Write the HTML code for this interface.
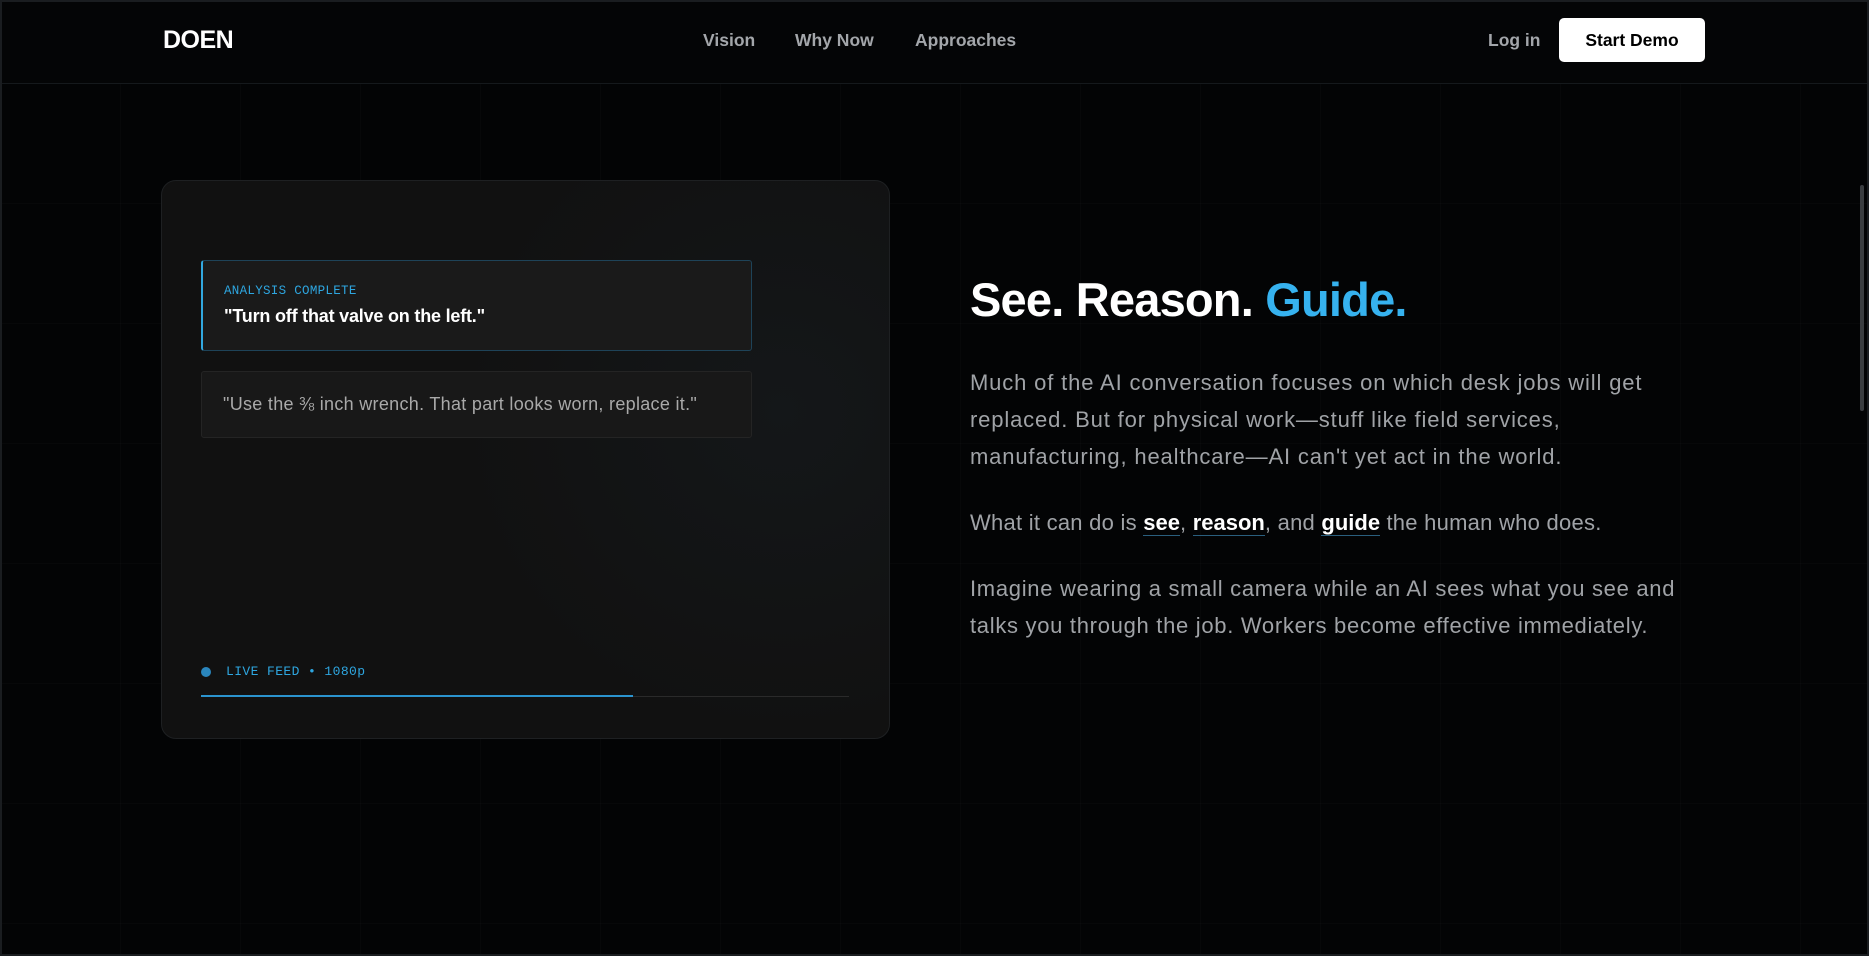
<!DOCTYPE html>
<html><head><meta charset="utf-8"><style>
*{margin:0;padding:0;box-sizing:border-box}
html,body{width:1869px;height:956px;overflow:hidden;background:#030405;font-family:"Liberation Sans",Arial,sans-serif}
body{position:relative;
background-image:linear-gradient(rgba(255,255,255,0.016) 1px,transparent 1px),linear-gradient(90deg,rgba(255,255,255,0.016) 1px,transparent 1px);
background-size:120px 120px;background-position:0 83px}
.frame{position:absolute;inset:0;border:2px solid #1a1d20;pointer-events:none}
nav{position:absolute;left:0;top:0;width:1869px;height:84px;background:#040506;border-bottom:1px solid #15191c}
.logo{position:absolute;left:163px;top:26px;font-size:25px;font-weight:700;color:#fff;letter-spacing:-0.5px}
.nl{position:absolute;top:30px;font-size:17.5px;color:#a3a6aa;font-weight:600}
.btn{position:absolute;left:1559px;top:18px;width:146px;height:44px;background:#fff;border-radius:5px;color:#000;font-size:17.5px;font-weight:600;text-align:center;line-height:44px}
.card{position:absolute;left:161px;top:180px;width:729px;height:559px;border-radius:15px;background:radial-gradient(circle at 620px 230px,#141719 0,#111 320px);border:1px solid #1e2022}
.b1{position:absolute;left:201px;top:260px;width:551px;height:91px;background:#1a1a1a;border:1px solid #1e4358;border-left:2px solid #32a8e0;border-radius:3px}
.lab{position:absolute;left:21px;top:23px;font-family:"Liberation Mono",monospace;font-size:12.5px;color:#2ea6e0;letter-spacing:0.3px}
.q1{position:absolute;left:21px;top:45px;font-size:18px;font-weight:700;color:#fff;letter-spacing:-0.2px}
.b2{position:absolute;left:201px;top:371px;width:551px;height:67px;background:#181818;border:1px solid #242424;border-radius:3px}
.q2{position:absolute;left:21px;top:22px;font-size:18px;color:#a9a9a9;letter-spacing:0.3px}
.dot{position:absolute;left:201px;top:667px;width:10px;height:10px;border-radius:50%;background:#2a86bd}
.live{position:absolute;left:226px;top:664px;font-family:"Liberation Mono",monospace;font-size:13px;color:#2ea6e0;letter-spacing:0.4px}
.track{position:absolute;left:201px;top:696px;width:648px;height:1px;background:#2a2a2a}
.fill{position:absolute;left:201px;top:695px;width:432px;height:2px;background:#2b94cf}
h1{position:absolute;left:970px;top:272px;font-size:47px;font-weight:700;color:#fff;letter-spacing:-0.8px}
h1 span{color:#36b2ef}
.p{position:absolute;left:970px;font-size:22px;line-height:37px;color:#a0a3a7;white-space:nowrap;letter-spacing:0.85px}
.p b{color:#fff;font-weight:600;border-bottom:1px solid #2a5f7e;letter-spacing:0}
.sb{position:absolute;left:1860px;top:185px;width:4px;height:226px;background:#3a3d40;border-radius:2px}
</style></head><body>
<nav>
<div class="logo">DOEN</div>
<div class="nl" style="left:703px">Vision</div>
<div class="nl" style="left:795px">Why Now</div>
<div class="nl" style="left:915px">Approaches</div>
<div class="nl" style="left:1488px">Log in</div>
<div class="btn">Start Demo</div>
</nav>
<div class="card"></div>
<div class="b1"><div class="lab">ANALYSIS COMPLETE</div><div class="q1">"Turn off that valve on the left."</div></div>
<div class="b2"><div class="q2">"Use the ⅜ inch wrench. That part looks worn, replace it."</div></div>
<div class="dot"></div><div class="live">LIVE FEED • 1080p</div>
<div class="track"></div><div class="fill"></div>
<h1>See. Reason. <span>Guide.</span></h1>
<div class="p" style="top:364px">Much of the AI conversation focuses on which desk jobs will get<br>replaced. But for physical work—stuff like field services,<br>manufacturing, healthcare—AI can't yet act in the world.</div>
<div class="p" style="top:504px;letter-spacing:0.25px">What it can do is <b>see</b>, <b>reason</b>, and <b>guide</b> the human who does.</div>
<div class="p" style="top:570px;letter-spacing:0.7px">Imagine wearing a small camera while an AI sees what you see and<br>talks you through the job. Workers become effective immediately.</div>
<div class="sb"></div>
<div class="frame"></div>
</body></html>
